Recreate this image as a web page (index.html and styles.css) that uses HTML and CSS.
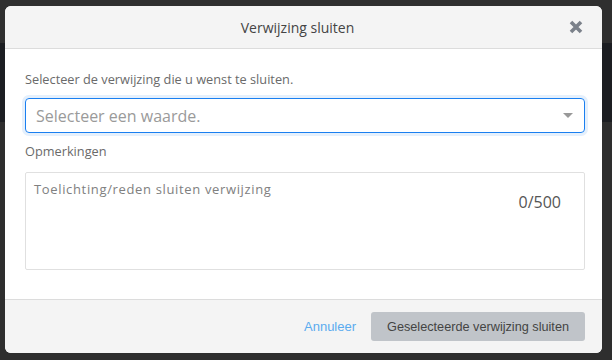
FILE: index.html
```html
<!DOCTYPE html>
<html lang="nl">
<head>
  <meta charset="UTF-8" />
  <meta name="viewport" content="width=device-width, initial-scale=1" />
  <title>Verwijzing sluiten</title>
  <link rel="stylesheet" href="styles.css">
</head>
<body>
  <div class="modal" role="dialog" aria-labelledby="modalTitle">
    <div class="modal-header">
      <h2 id="modalTitle">Verwijzing sluiten</h2>
      <button class="close-btn" aria-label="Sluiten">
        <svg width="14" height="14" viewBox="0 0 14 14">
          <path d="M2 2 L12 12 M12 2 L2 12" stroke="#7b818a" stroke-width="3.6" stroke-linecap="butt" />
        </svg>
      </button>
    </div>

    <div class="modal-body">
      <label class="field-label">Selecteer de verwijzing die u wenst te sluiten.</label>
      <div class="select-box" tabindex="0">
        <span class="placeholder">Selecteer een waarde.</span>
        <span class="caret"></span>
      </div>

      <label class="field-label">Opmerkingen</label>
      <div class="textarea-box">
        <span class="ta-placeholder">Toelichting/reden sluiten verwijzing</span>
        <span class="counter">0/500</span>
      </div>
    </div>

    <div class="modal-footer">
      <a href="#" class="cancel-link">Annuleer</a>
      <button class="submit-btn" disabled>Geselecteerde verwijzing sluiten</button>
    </div>
  </div>
</body>
</html>
```

FILE: styles.css
```css
* {
  margin: 0; padding: 0; box-sizing: border-box;
}
body {
  height: 360px;
  overflow: hidden;
  font-family: 'Open Sans', 'Noto Sans', sans-serif;
  background: linear-gradient(to bottom, #2f2f2f 0, #2f2f2f 43px, #1c1e22 43px, #1c1e22 122px, #2e2e2e 122px);
  padding: 6px 10px 0 5px;
}
.modal {
  width: 597px;
  height: 347px;
  background: #fff;
  border-radius: 6px;
  overflow: hidden;
  display: flex;
  flex-direction: column;
}
.modal-header {
  height: 43px;
  background: #f4f4f4;
  border-bottom: 1px solid #dcdcdc;
  display: flex;
  align-items: center;
  justify-content: center;
  padding-right: 12px;
  position: relative;
}
.modal-header h2 {
  font-size: 14px;
  font-weight: 400;
  color: #444;
}
.close-btn {
  position: absolute;
  right: 19px;
  top: 14px;
  border: none;
  background: none;
  cursor: pointer;
  width: 14px;
  height: 14px;
  display: flex;
}
.modal-body {
  flex: 1;
  padding: 22px 17px 0 20px;
  display: flex;
  flex-direction: column;
}
.field-label {
  font-size: 12.75px;
  color: #6a6a6a;
  line-height: 17px;
}
.select-box {
  margin-top: 10px;
  height: 35px;
  border: 1px solid #1a7ff0;
  border-radius: 4px;
  box-shadow: 0 0 0 3px #e5f0fc;
  display: flex;
  align-items: center;
  justify-content: space-between;
  padding: 0 11px 0 10px;
  margin-bottom: 10px;
}
.placeholder {
  font-size: 16px;
  color: #9a9a9a;
}
.caret {
  width: 0;
  height: 0;
  border-left: 5px solid transparent;
  border-right: 5px solid transparent;
  border-top: 5px solid #999;
}
.textarea-box {
  margin-top: 12px;
  height: 98px;
  border: 1px solid #e0e0e0;
  border-radius: 2px;
  padding: 7px 23px 0 8px;
  display: flex;
  justify-content: space-between;
  align-items: flex-start;
}
.ta-placeholder {
  font-size: 13px;
  letter-spacing: 0.65px;
  color: #808080;
}
.counter {
  font-size: 16px;
  color: #555;
  margin-top: 11px;
}
.modal-footer {
  height: 54px;
  background: #f4f4f4;
  border-top: 1px solid #dcdcdc;
  display: flex;
  align-items: center;
  justify-content: flex-end;
  gap: 15px;
  padding: 0 17px 0 20px;
  font-family: 'Liberation Sans', Arial, sans-serif;
}
.cancel-link {
  font-size: 13px;
  color: #5aabef;
  text-decoration: none;
}
.submit-btn {
  height: 29px;
  padding: 0 16px;
  background: #c0c4c9;
  color: #444;
  border: none;
  border-radius: 3px;
  font-family: inherit;
  font-size: 12.7px;
}
```
